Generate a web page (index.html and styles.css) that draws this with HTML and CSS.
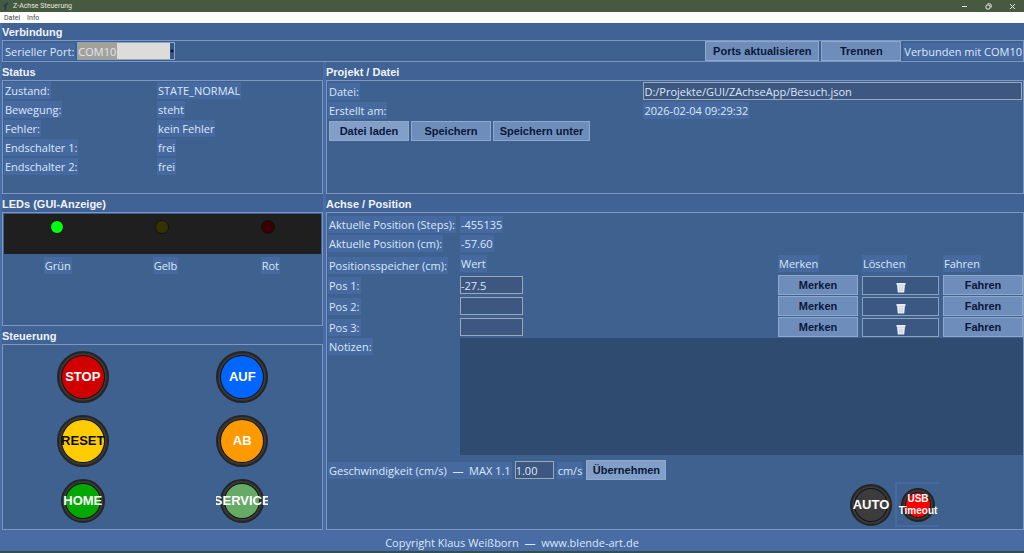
FILE: index.html
```html
<!DOCTYPE html>
<html lang="de">
<head>
<meta charset="utf-8">
<meta name="viewport" content="width=device-width, initial-scale=1">
<title>Z-Achse Steuerung</title>
<link rel="stylesheet" href="styles.css">
</head>
<body>
<header class="titlebar">
  <svg class="app-icon" width="8" height="9" viewBox="0 0 8 9"><path d="M6 0.5 3.6 3.2 3 8.5M1.5 3.5l2 .5" fill="none" stroke="#1d3560" stroke-width="1.3"/></svg>
  <span class="app-title">Z-Achse Steuerung</span>
  <div class="window-buttons">
    <button type="button" aria-label="Minimieren"><svg width="7" height="7" viewBox="0 0 7 7"><path d="M1 3.5h5"/></svg></button>
    <button type="button" aria-label="Wiederherstellen"><svg width="7" height="7" viewBox="0 0 7 7"><rect x="1" y="2" width="4" height="4" rx="1"/><path d="M2.5 .8h2.2a1.5 1.5 0 0 1 1.5 1.5v2.2"/></svg></button>
    <button type="button" aria-label="Schließen"><svg width="7" height="7" viewBox="0 0 7 7"><path d="M1 1l5 5M6 1L1 6"/></svg></button>
  </div>
</header>
<nav class="menubar">
  <button type="button">Datei</button>
  <button type="button">Info</button>
</nav>

<main class="content">
  <section class="group connection">
    <h2>Verbindung</h2>
    <div class="frame connection-row">
      <label class="label" for="port">Serieller Port:</label>
      <select id="port" class="port"><option>COM10</option></select>
      <span class="spacer"></span>
      <button type="button" class="btn btn-ports">Ports aktualisieren</button>
      <button type="button" class="btn">Trennen</button>
      <span class="label">Verbunden mit COM10</span>
    </div>
  </section>

  <section class="group status">
    <h2>Status</h2>
    <dl class="frame pairs">
      <dt><span class="label">Zustand:</span></dt><dd><span class="label">STATE_NORMAL</span></dd>
      <dt><span class="label">Bewegung:</span></dt><dd><span class="label">steht</span></dd>
      <dt><span class="label">Fehler:</span></dt><dd><span class="label">kein Fehler</span></dd>
      <dt><span class="label">Endschalter 1:</span></dt><dd><span class="label">frei</span></dd>
      <dt><span class="label">Endschalter 2:</span></dt><dd><span class="label">frei</span></dd>
    </dl>
  </section>

  <section class="group project">
    <h2>Projekt / Datei</h2>
    <div class="frame">
      <div class="project-grid">
        <label class="label" for="file">Datei:</label>
        <input id="file" class="field" type="text" value="D:/Projekte/GUI/ZAchseApp/Besuch.json">
        <span class="label">Erstellt am:</span>
        <span class="label">2026-02-04 09:29:32</span>
      </div>
      <div class="project-buttons">
        <button type="button" class="btn btn-light">Datei laden</button>
        <button type="button" class="btn">Speichern</button>
        <button type="button" class="btn btn-save-as">Speichern unter</button>
      </div>
    </div>
  </section>

  <section class="group leds">
    <h2>LEDs (GUI-Anzeige)</h2>
    <div class="frame led-frame">
      <div class="led-strip">
        <span class="led led-green"></span>
        <span class="led led-yellow"></span>
        <span class="led led-red"></span>
      </div>
      <div class="led-labels">
        <span class="label">Grün</span>
        <span class="label">Gelb</span>
        <span class="label">Rot</span>
      </div>
    </div>
  </section>

  <section class="group control">
    <h2>Steuerung</h2>
    <div class="frame control-grid">
      <button type="button" class="round"><span class="disc stop"></span><span class="cap">STOP</span></button>
      <button type="button" class="round"><span class="disc up"></span><span class="cap">AUF</span></button>
      <button type="button" class="round"><span class="disc reset"></span><span class="cap cap-dark">RESET</span></button>
      <button type="button" class="round"><span class="disc down"></span><span class="cap">AB</span></button>
      <button type="button" class="round round-medium"><span class="disc home"></span><span class="cap">HOME</span></button>
      <button type="button" class="round round-medium"><span class="disc service"></span><span class="cap">SERVICE</span></button>
    </div>
  </section>

  <section class="group axis">
    <h2>Achse / Position</h2>
    <div class="frame axis-frame">
      <div class="axis-grid">
        <span class="label">Aktuelle Position (Steps):</span>
        <span class="label wide">-455135</span>
        <span class="label">Aktuelle Position (cm):</span>
        <span class="label wide">-57.60</span>

        <span class="label memory">Positionsspeicher (cm):</span>
        <span class="label">Wert</span>
        <span class="label">Merken</span>
        <span class="label">Löschen</span>
        <span class="label">Fahren</span>

        <label class="label" for="pos1">Pos 1:</label>
        <input id="pos1" class="field pos" type="text" value="-27.5">
        <button type="button" class="btn">Merken</button>
        <button type="button" class="btn-trash" aria-label="Pos 1 löschen"><svg width="10" height="11" viewBox="0 0 10 11"><path d="M.5 1h9v2H9l-.8 7.5H1.8L1 3H.5z" fill="#e9edf5"/><path d="M1 3.2h8M3.4 4.5l.4 5M5 4.5v5M6.6 4.5l-.4 5" fill="none" stroke="#b9c5da" stroke-width=".6"/></svg></button>
        <button type="button" class="btn">Fahren</button>

        <label class="label" for="pos2">Pos 2:</label>
        <input id="pos2" class="field pos" type="text">
        <button type="button" class="btn">Merken</button>
        <button type="button" class="btn-trash" aria-label="Pos 2 löschen"><svg width="10" height="11" viewBox="0 0 10 11"><path d="M.5 1h9v2H9l-.8 7.5H1.8L1 3H.5z" fill="#e9edf5"/><path d="M1 3.2h8M3.4 4.5l.4 5M5 4.5v5M6.6 4.5l-.4 5" fill="none" stroke="#b9c5da" stroke-width=".6"/></svg></button>
        <button type="button" class="btn">Fahren</button>

        <label class="label" for="pos3">Pos 3:</label>
        <input id="pos3" class="field pos" type="text">
        <button type="button" class="btn">Merken</button>
        <button type="button" class="btn-trash" aria-label="Pos 3 löschen"><svg width="10" height="11" viewBox="0 0 10 11"><path d="M.5 1h9v2H9l-.8 7.5H1.8L1 3H.5z" fill="#e9edf5"/><path d="M1 3.2h8M3.4 4.5l.4 5M5 4.5v5M6.6 4.5l-.4 5" fill="none" stroke="#b9c5da" stroke-width=".6"/></svg></button>
        <button type="button" class="btn">Fahren</button>

        <label class="label notes-label" for="notes">Notizen:</label>
        <textarea id="notes" class="notes"></textarea>
      </div>
      <div class="speed-row">
        <label class="label" for="speed">Geschwindigkeit (cm/s)&nbsp; —&nbsp; MAX 1.1</label>
        <input id="speed" class="field speed" type="text" value="1.00">
        <span class="label">cm/s</span>
        <button type="button" class="btn btn-light">Übernehmen</button>
      </div>
      <div class="mode-row">
        <button type="button" class="round round-small"><span class="disc auto"></span><span class="cap">AUTO</span></button>
        <button type="button" class="round round-usb"><span class="disc usb"></span><span class="cap cap-small">USB<br>Timeout</span></button>
      </div>
    </div>
  </section>
</main>
<footer class="footer">Copyright Klaus Weißborn&nbsp; —&nbsp; www.blende-art.de</footer>
</body>
</html>
```

FILE: styles.css
```css
* { box-sizing: border-box; }

body {
  margin: 0;
  min-height: 100vh;
  display: flex;
  flex-direction: column;
  background: #486ca3;
  border-bottom: 2px solid #33504f;
  color: #dbe8fa;
  font: 11px/17px "Open Sans", "Noto Sans", sans-serif;
}

button, input, select, textarea { font: inherit; color: inherit; margin: 0; }

.titlebar {
  display: flex;
  align-items: center;
  height: 12px;
  padding-left: 2px;
  background: #465a3f;
  color: #e4e9e0;
  font: 7px/12px Roboto, sans-serif;
}
.app-title { margin-left: 3px; }
.window-buttons { display: flex; margin-left: auto; }
.window-buttons button {
  display: grid;
  place-items: center;
  width: 24px;
  height: 12px;
  padding: 0;
  border: 0;
  background: none;
}
.window-buttons svg { fill: none; stroke: #e4e9e0; stroke-width: 1; }

.menubar {
  display: flex;
  gap: 7px;
  height: 11px;
  padding-left: 4px;
  background: #fff;
}
.menubar button {
  padding: 0;
  border: 0;
  background: none;
  color: #444;
  font: 7px/12px Roboto, sans-serif;
}

.content {
  flex: 1;
  display: grid;
  grid-template-columns: 321fr 698fr;
  grid-template-rows: auto minmax(132px, auto) minmax(132px, auto) 1fr;
  grid-template-areas:
    "connection connection"
    "status project"
    "leds axis"
    "control axis";
  column-gap: 3px;
  padding-left: 2px;
}
.group { display: flex; flex-direction: column; min-width: 0; }
.connection { grid-area: connection; }
.status { grid-area: status; }
.project { grid-area: project; }
.leds { grid-area: leds; }
.control { grid-area: control; }
.axis { grid-area: axis; }

h2 {
  margin: 0;
  padding-top: 2px;
  background: #416294;
  color: #eef4ff;
  font: bold 11px/16px "Liberation Sans", Arial, sans-serif;
}
.connection h2 { padding-top: 1px; }

.frame {
  flex: 1;
  margin: 0;
  padding: 1px;
  border: 1px solid #7c98c2;
  background: #3f618f;
}

.label {
  justify-self: start;
  padding: 0 1px;
  background: #466a9f;
  white-space: nowrap;
}

.btn {
  min-width: 80px;
  height: 20px;
  padding: 0 4px;
  border: 1px solid #8fa9cd;
  background: #6f8dbb;
  color: #0b1838;
  font: bold 11px/18px "Liberation Sans", Arial, sans-serif;
  white-space: nowrap;
}
.btn-light { background: #829fca; }

.field {
  min-width: 0;
  height: 18px;
  padding: 0;
  border: 1px solid #9aa9b8;
  border-radius: 0;
  background: #3d5781;
}

.connection-row {
  display: flex;
  align-items: center;
  gap: 2px;
  padding: 0 0 0 1px;
}
.port {
  appearance: none;
  width: 98px;
  height: 18px;
  padding: 0 6px 0 0;
  border: 1px solid #8ba3c2;
  border-radius: 0;
  background:
    radial-gradient(circle at 94px 8px, #0b1838 1px, transparent 2px),
    linear-gradient(90deg, #a5a098 39px, #dedcd8 39px calc(100% - 4px), #35588b calc(100% - 4px));
}
.spacer { flex: 1; }
.btn-ports { min-width: 114px; }

.pairs {
  display: grid;
  grid-template-columns: 153fr 164fr;
  grid-auto-rows: 17px;
  row-gap: 2px;
  align-content: start;
}
.pairs dt, .pairs dd { margin: 0; }
.pairs .label { display: inline-block; }

.project-grid {
  display: grid;
  grid-template-columns: 315fr 378fr;
  grid-auto-rows: 18px;
  row-gap: 1px;
  align-items: center;
}
.project-buttons { display: flex; gap: 2px; padding: 2px 0 0 1px; }
.btn-save-as { min-width: 97px; }

.led-strip {
  display: grid;
  grid-template-columns: repeat(3, 1fr);
  justify-items: center;
  height: 40px;
  padding-top: 6px;
  background: #1f1f1f;
}
.led { width: 14px; height: 14px; border-radius: 50%; border: 1px solid #111; }
.led-green { background: #00ff10; }
.led-yellow { background: #333300; }
.led-red { background: #380000; }
.led-labels {
  display: grid;
  grid-template-columns: 107fr 108fr 101fr;
  padding-top: 3px;
}
.led-labels .label { justify-self: center; }

.control-grid {
  display: grid;
  grid-template-columns: 1fr 1fr;
  grid-template-rows: 64fr 64fr 56fr;
  place-items: center;
  padding: 0;
}
.round {
  display: grid;
  place-content: center;
  place-items: center;
  width: 52px;
  height: 52px;
  padding: 0;
  border: 0;
  overflow: hidden;
  background: none;
}
.disc {
  grid-area: 1 / 1;
  width: 52px;
  height: 52px;
  border: 2px solid #242424;
  border-radius: 50%;
  background-clip: padding-box;
  box-shadow: inset 0 0 0 2px #3a3a3a, inset 0 0 0 3px #151515;
}
.cap {
  grid-area: 1 / 1;
  color: #fff;
  font: bold 13px/16px "Liberation Sans", Arial, sans-serif;
  white-space: nowrap;
  text-align: center;
}
.cap-dark { color: #0a0a0a; }
.cap-small { font-size: 10px; line-height: 12px; }
.round-medium { height: 44px; }
.round-medium .disc { width: 44px; height: 44px; }
.stop { background-color: #d00000; }
.up { background-color: #0066ff; }
.reset { background-color: #ffcc00; }
.down { background-color: #ff9900; }
.home { background-color: #00a800; }
.service { background-color: #66aa66; }
.auto { background-color: #3c3c3c; }
.usb { background-color: #ff0000; }

.axis-frame { display: flex; flex-direction: column; padding-right: 0; }
.axis-grid {
  display: grid;
  grid-template-columns: 128px minmax(63px, 1fr) 80px 77px 80px;
  grid-template-rows: 18px 18px 21px 20px 20px 20px minmax(117px, auto);
  column-gap: 4px;
  row-gap: 1px;
  align-items: center;
  padding-top: 1px;
}
.wide { grid-column: 2 / -1; }
.memory { align-self: end; }
.pos { width: 63px; }
.btn-trash {
  display: grid;
  place-items: end center;
  height: 19px;
  padding: 0 0 1px;
  border: 1px solid #8aa0bd;
  background: #3b5882;
}
.notes-label { align-self: start; }
.notes {
  grid-column: 2 / -1;
  align-self: stretch;
  padding: 2px;
  border: 0;
  background: #2f4b70;
  resize: none;
}
.speed-row {
  display: flex;
  align-items: center;
  gap: 3px;
  padding-top: 5px;
}
.speed { width: 39px; }
.mode-row {
  display: flex;
  align-items: center;
  gap: 3px;
  margin-top: auto;
  padding: 0 84px 1px 0;
  justify-content: flex-end;
}
.round-small { width: 42px; height: 42px; }
.round-small .disc { width: 42px; height: 42px; }
.round-usb {
  width: 44px;
  height: 45px;
  border: 2px solid #466a9f;
  border-right: 0;
}
.round-usb .disc { width: 34px; height: 34px; }

.footer {
  height: 21px;
  padding-top: 4px;
  text-align: center;
}
```
